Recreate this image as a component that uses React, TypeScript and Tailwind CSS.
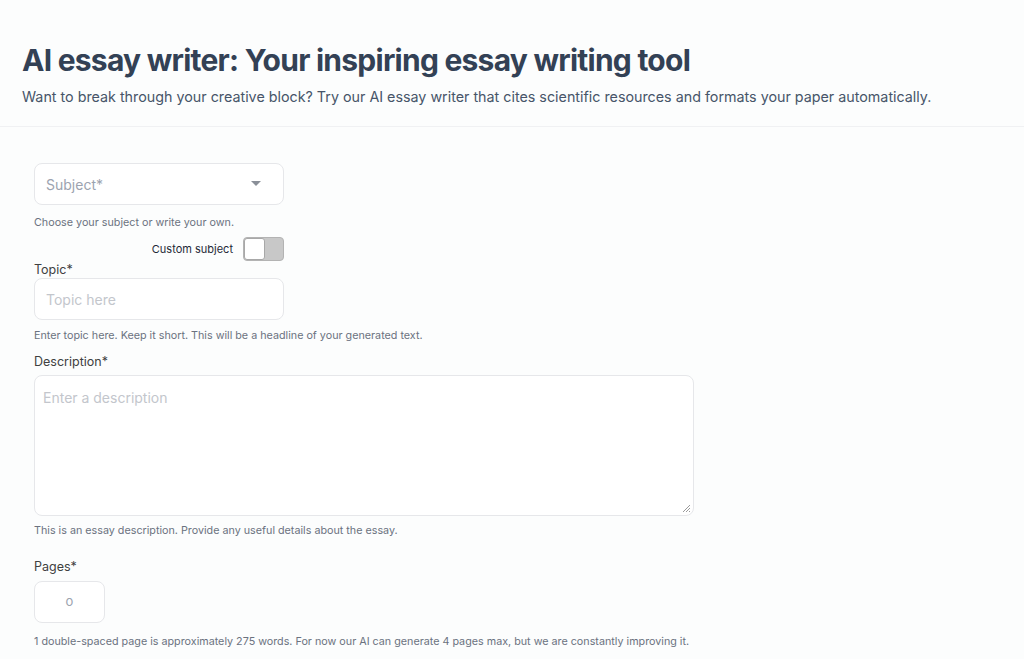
import React from 'react';

const font = { fontFamily: 'Inter, "Liberation Sans", sans-serif' };

const Help: React.FC<{ className: string; children: React.ReactNode }> = ({ className, children }) => (
  <p className={`text-[10.75px] leading-4 text-[#6b7280] ${className}`}>{children}</p>
);

export default function App() {
  return (
    <div className="min-h-[659px] bg-[#fcfdfd] overflow-hidden" style={font}>
      {/* Header */}
      <div className="border-b border-[#f0f1f3] px-[22px] pt-[42px] pb-[17px]">
        <h1 className="text-[30px] leading-9 font-bold tracking-[-0.025em] text-[#334155]">
          AI essay writer: Your inspiring essay writing tool
        </h1>
        <p className="mt-[7px] text-[14.3px] leading-6 text-[#475569]">
          Want to break through your creative block? Try our AI essay writer that cites scientific resources and formats your paper automatically.
        </p>
      </div>

      {/* Form */}
      <div className="px-[34px] pt-[36px]">
        <div className="w-[250px] h-[42px] rounded-lg border border-[#e6e7ea] bg-white flex items-center justify-between pl-[11px] pr-[22px]">
          <span className="text-[14px] text-[#9ca3af]">Subject*</span>
          <svg width="10" height="6" viewBox="0 0 10 6"><path d="M0 0h10L5 5z" fill="#8a8f98" /></svg>
        </div>
        <Help className="mt-[10px]">Choose your subject or write your own.</Help>

        <div className="w-[250px] flex items-center justify-end gap-[10px] mt-[6px]">
          <span className="text-[11px] text-[#1f2937]">Custom subject</span>
          <div className="w-[41px] h-[24px] rounded-[4px] bg-[#c8c8c8] border border-[#b3b3b3] flex">
            <div className="w-[21px] h-full rounded-[3px] bg-white border border-[#a8a8a8]" />
          </div>
        </div>

        <label className="block mt-[1px] text-[12.5px] leading-4 text-[#404040]">Topic*</label>
        <div className="w-[250px] h-[42px] rounded-lg border border-[#e6e7ea] bg-white flex items-center pl-[11px]">
          <span className="text-[14px] text-[#c3c6cc]">Topic here</span>
        </div>
        <Help className="mt-[8px]">Enter topic here. Keep it short. This will be a headline of your generated text.</Help>

        <label className="block mt-[8px] mb-[3px] text-[12.5px] leading-5 text-[#404040]">Description*</label>
        <div className="relative w-[660px] h-[141px] rounded-lg border border-[#e6e7ea] bg-white px-[8px] pt-[9px]">
          <span className="text-[14px] text-[#c3c6cc]">Enter a description</span>
          <svg className="absolute right-[2px] bottom-[2px]" width="9" height="9" viewBox="0 0 9 9">
            <path d="M8 1L1 8M8 4L4 8M8 7L7 8" stroke="#9a9a9a" strokeWidth="1" />
          </svg>
        </div>
        <Help className="mt-[7px]">This is an essay description. Provide any useful details about the essay.</Help>

        <label className="block mt-[18px] mb-[4px] text-[12.5px] leading-5 text-[#404040]">Pages*</label>
        <div className="w-[71px] h-[42px] rounded-lg border border-[#e6e7ea] bg-white flex items-center justify-center">
          <span className="text-[13px] text-[#9ca3af]">o</span>
        </div>
        <Help className="mt-[11px]">
          1 double-spaced page is approximately 275 words. For now our AI can generate 4 pages max, but we are constantly improving it.
        </Help>
      </div>
    </div>
  );
}
